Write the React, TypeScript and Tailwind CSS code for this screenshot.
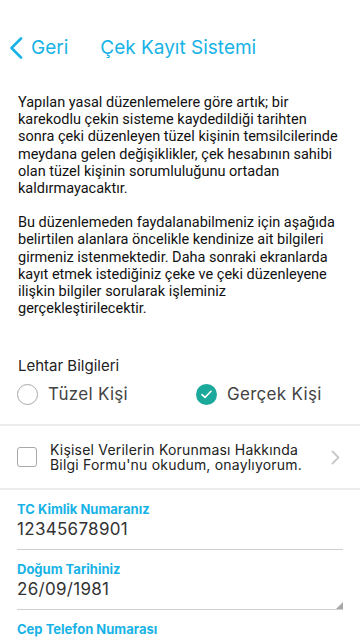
const BLUE = "text-[#17b3e6]";

const PARA_1 = [
  "Yapılan yasal düzenlemelere göre artık; bir",
  "karekodlu çekin sisteme kaydedildiği tarihten",
  "sonra çeki düzenleyen tüzel kişinin temsilcilerinde",
  "meydana gelen değişiklikler, çek hesabının sahibi",
  "olan tüzel kişinin sorumluluğunu ortadan",
  "kaldırmayacaktır.",
];

const PARA_2 = [
  "Bu düzenlemeden faydalanabilmeniz için aşağıda",
  "belirtilen alanlara öncelikle kendinize ait bilgileri",
  "girmeniz istenmektedir. Daha sonraki ekranlarda",
  "kayıt etmek istediğiniz çeke ve çeki düzenleyene",
  "ilişkin bilgiler sorularak işleminiz",
  "gerçekleştirilecektir.",
];

function Radio({ checked, label }: { checked?: boolean; label: string }) {
  return (
    <div className="flex items-center gap-[10px]">
      {checked ? (
        <span className="flex h-[21px] w-[21px] items-center justify-center rounded-full bg-[#1aa99a]">
          <svg width="11" height="9" viewBox="0 0 11 9" fill="none">
            <path d="M1 4.6 L4 7.4 L10 1.2" stroke="white" strokeWidth="1.6" strokeLinecap="round" strokeLinejoin="round" />
          </svg>
        </span>
      ) : (
        <span className="h-[21px] w-[21px] rounded-full border border-[#a9a9a9]" />
      )}
      <span className="text-[17px] tracking-[0.3px] text-[#444]">{label}</span>
    </div>
  );
}

function Field({ label, value, select }: { label: string; value?: string; select?: boolean }) {
  return (
    <div className="pt-[11px]">
      <div className={`text-[13px] leading-[16px] font-bold ${BLUE}`}>{label}</div>
      {value && (
        <div className="relative mt-[2px] border-b border-[#cfcfcf] pb-[10px] text-[17px] leading-[20px] tracking-[0.3px] text-[#333]">
          {value}
          {select && (
            <svg className="absolute bottom-0 right-0" width="7" height="7" viewBox="0 0 7 7">
              <path d="M7 0 L7 7 L0 7 Z" fill="#a8a8a8" />
            </svg>
          )}
        </div>
      )}
    </div>
  );
}

function Para({ lines, className = "" }: { lines: string[]; className?: string }) {
  return (
    <p className={className}>
      {lines.map((l) => (
        <span key={l} className="block whitespace-nowrap">
          {l}
        </span>
      ))}
    </p>
  );
}

export default function App() {
  return (
    <div className="min-h-[640px] bg-white font-['Inter','Liberation_Sans',sans-serif] text-black">
      <header className={`flex h-[94px] items-center pt-[2px] ${BLUE}`}>
        <div className="flex items-center pl-[9px]">
          <svg width="14" height="22" viewBox="0 0 14 22" fill="none">
            <path d="M12 1.5 L2.5 11 L12 20.5" stroke="#17b3e6" strokeWidth="2.6" strokeLinecap="round" strokeLinejoin="round" />
          </svg>
          <span className="ml-[8px] text-[19px]">Geri</span>
        </div>
        <div className="ml-[32px] text-[19px]">Çek Kayıt Sistemi</div>
      </header>

      <div className="pl-[18px] pr-[10px] font-['Roboto',sans-serif] text-[14.5px] leading-[17.2px] text-[#111]">
        <Para lines={PARA_1} />
        <Para lines={PARA_2} className="mt-[17px]" />
        <div className="mt-[40px] font-['Inter',sans-serif] text-[15px] text-[#222]">Lehtar Bilgileri</div>
      </div>

      <div className="flex px-[17px] pt-[7px] pb-[17px]">
        <div className="w-[179px]">
          <Radio label="Tüzel Kişi" />
        </div>
        <Radio checked label="Gerçek Kişi" />
      </div>

      <div className="h-[2px] bg-[#ececec]" />

      <div className="flex items-center px-[17px] py-[16px]">
        <span className="h-[20px] w-[20px] shrink-0 rounded-[3px] border border-[#a9a9a9]" />
        <div className="ml-[13px] flex-1 text-[14px] leading-[15px] tracking-[0.2px] text-[#222]">
          Kişisel Verilerin Korunması Hakkında Bilgi Formu'nu okudum, onaylıyorum.
        </div>
        <svg className="mr-[3px]" width="9" height="15" viewBox="0 0 9 15" fill="none">
          <path d="M1.5 1.5 L7.5 7.5 L1.5 13.5" stroke="#c8c8cc" strokeWidth="1.8" strokeLinecap="round" strokeLinejoin="round" />
        </svg>
      </div>

      <div className="h-[2px] bg-[#ececec]" />

      <div className="px-[17px]">
        <Field label="TC Kimlik Numaranız" value="12345678901" />
        <Field label="Doğum Tarihiniz" value="26/09/1981" select />
        <Field label="Cep Telefon Numarası" />
      </div>
    </div>
  );
}
